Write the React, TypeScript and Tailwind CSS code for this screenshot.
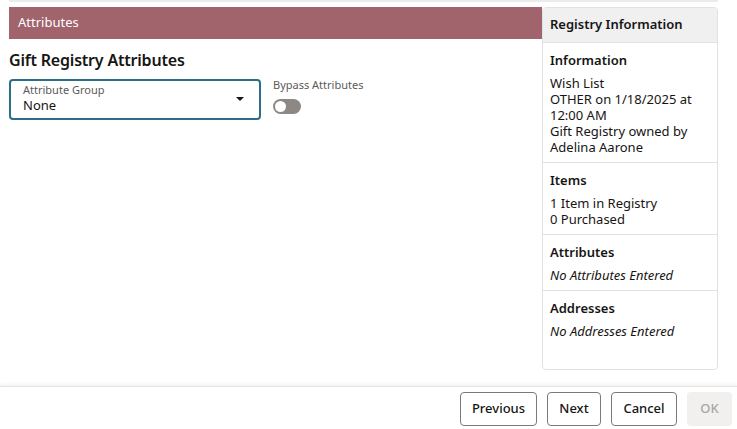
const Divider = () => <div className="h-px bg-[#dfe3e6]" />;

const Section = ({ title, children }: { title: string; children: React.ReactNode }) => (
  <div className="px-[7px] pt-[8px] pb-[7px]">
    <h3 className="text-[13px] font-semibold leading-[18px] text-[#161513]">{title}</h3>
    <div className="mt-[6px] text-[13px] leading-[16px] text-[#161513]">{children}</div>
  </div>
);

const Button = ({ label, width, disabled }: { label: string; width: string; disabled?: boolean }) => (
  <button
    className={
      disabled
        ? `${width} h-[34px] rounded-[4px] bg-[#f1f0ef] text-[13px] font-medium text-[#a8a6a4]`
        : `${width} h-[34px] rounded-[4px] border border-[#7c7a78] bg-white text-[13px] font-medium text-[#161513]`
    }
  >
    {label}
  </button>
);

export default function App() {
  return (
    <div
      className="h-[429px] w-full flex flex-col bg-white overflow-hidden"
      style={{ fontFamily: '"Noto Sans", "Open Sans", sans-serif' }}
    >
      <div className="ml-[9px] mr-[19px] h-[2px] bg-[#ebebeb]" />
      <div className="flex-1 flex pt-[5px] pl-[9px] pr-[19px]">
        {/* main column */}
        <div className="flex-1">
          <div className="h-[32px] bg-[#a1646d] flex items-center px-[9px]">
            <span className="text-[13px] text-white">Attributes</span>
          </div>
          <h2 className="mt-[10px] text-[16px] font-semibold leading-[22px] tracking-[-0.2px] text-[#161513]">
            Gift Registry Attributes
          </h2>
          <div className="mt-[8px] flex gap-[12px]">
            <div className="w-[252px] h-[41px] rounded-[4px] border-2 border-[#2b6f86] flex items-center pl-[12px] pr-[15px]">
              <div className="flex-1 mt-[-3px]">
                <div className="text-[11px] leading-[14px] text-[#5c5a58]">Attribute Group</div>
                <div className="text-[13px] leading-[16px] text-[#161513]">None</div>
              </div>
              <svg width="8" height="4" viewBox="0 0 8 4" className="mt-[-2px]">
                <path d="M0 0h8L4 4z" fill="#161513" />
              </svg>
            </div>
            <div className="mt-[-1px]">
              <div className="text-[11px] leading-[14px] text-[#5c5a58]">Bypass Attributes</div>
              <div className="mt-[7px] w-[28px] h-[15px] rounded-full bg-[#8d8883] flex items-center pl-[2px]">
                <div className="w-[11px] h-[11px] rounded-full bg-white" />
              </div>
            </div>
          </div>
        </div>

        {/* registry info panel */}
        <div className="w-[176px] h-[363px] rounded-[4px] border border-[#dfe3e6] flex flex-col overflow-hidden">
          <div className="h-[35px] shrink-0 bg-[#f0f0f0] border-b border-[#dfe3e6] flex items-center px-[7px]">
            <span className="text-[13px] font-semibold text-[#161513]">Registry Information</span>
          </div>
          <Section title="Information">
            <p>Wish List</p>
            <p>OTHER on 1/18/2025 at 12:00 AM</p>
            <p>Gift Registry owned by Adelina Aarone</p>
          </Section>
          <Divider />
          <Section title="Items">
            <p>1 Item in Registry</p>
            <p>0 Purchased</p>
          </Section>
          <Divider />
          <Section title="Attributes">
            <p className="italic">No Attributes Entered</p>
          </Section>
          <Divider />
          <Section title="Addresses">
            <p className="italic">No Addresses Entered</p>
          </Section>
        </div>
      </div>

      {/* footer */}
      <div className="h-[43px] border-t border-[#e4e4e4] shadow-[0_-2px_3px_rgba(0,0,0,0.05)] flex items-start justify-end gap-[10px] pt-[5px] pr-[5px]">
        <Button label="Previous" width="w-[77px]" />
        <Button label="Next" width="w-[54px]" />
        <Button label="Cancel" width="w-[66px]" />
        <Button label="OK" width="w-[45px]" disabled />
      </div>
    </div>
  );
}
